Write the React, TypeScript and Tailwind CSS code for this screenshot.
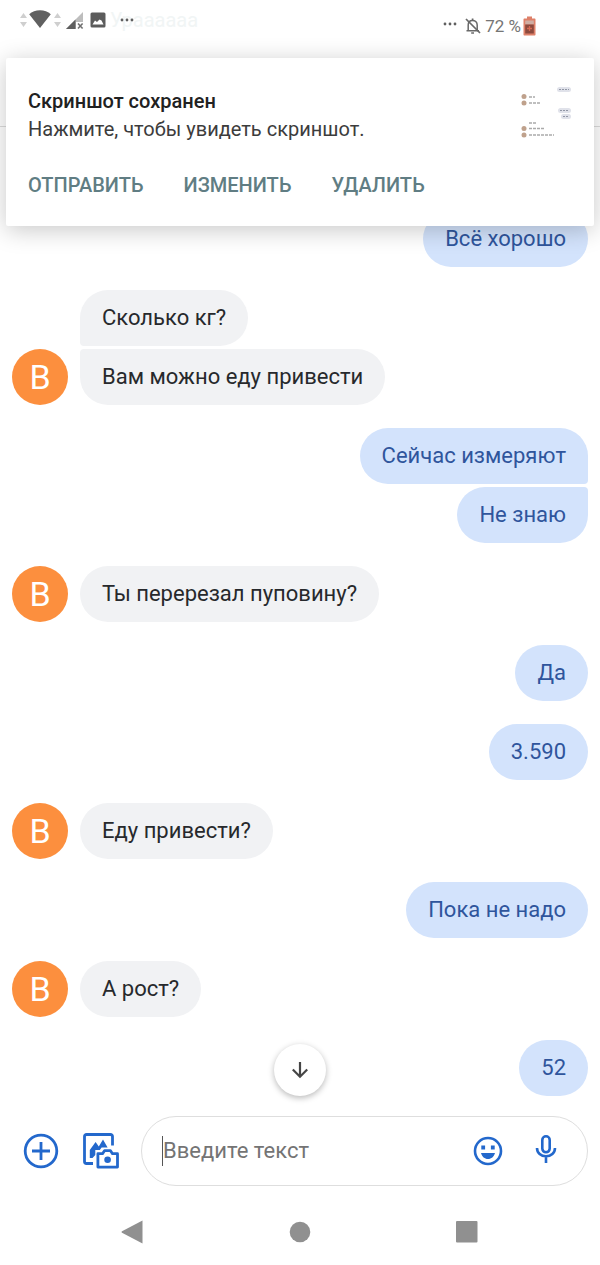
import type { ReactNode } from "react";

type Message = { text: string; corner?: string };
type Group = { from: "them" | "me"; messages: Message[] };

const groups: Group[] = [
  { from: "me", messages: [{ text: "Всё хорошо" }] },
  {
    from: "them",
    messages: [
      { text: "Сколько кг?", corner: "rounded-bl-sm" },
      { text: "Вам можно еду привести", corner: "rounded-tl-sm" },
    ],
  },
  {
    from: "me",
    messages: [
      { text: "Сейчас измеряют", corner: "rounded-br-sm" },
      { text: "Не знаю", corner: "rounded-tr-sm" },
    ],
  },
  { from: "them", messages: [{ text: "Ты перерезал пуповину?" }] },
  { from: "me", messages: [{ text: "Да" }] },
  { from: "me", messages: [{ text: "3.590" }] },
  { from: "them", messages: [{ text: "Еду привести?" }] },
  { from: "me", messages: [{ text: "Пока не надо" }] },
  { from: "them", messages: [{ text: "А рост?" }] },
  { from: "me", messages: [{ text: "52" }] },
];

function Dots() {
  return (
    <svg width="14" height="4" viewBox="0 0 14 4" fill="#5f5f5f">
      <circle cx="2" cy="2" r="1.4" />
      <circle cx="7" cy="2" r="1.4" />
      <circle cx="12" cy="2" r="1.4" />
    </svg>
  );
}

function DataArrows() {
  return (
    <svg width="7" height="14" viewBox="0 0 7 14" fill="#cfcfcf">
      <path d="M3.5 0L7 5H0zM3.5 14L0 9h7z" />
    </svg>
  );
}

function StatusBar() {
  return (
    <div className="flex h-10 items-center justify-between pl-5 pr-16">
      <div className="flex items-center">
        <DataArrows />
        <svg className="ml-px" width="24" height="20" viewBox="0 0 24 20" fill="#606060">
          <path d="M12 18L1.2 4.200C4 1.600 7.800 0.200 12 0.200s8 1.400 10.800 4z" />
        </svg>
        <span className="ml-0.5">
          <DataArrows />
        </span>
        <svg className="ml-1" width="19" height="19" viewBox="0 0 19 19">
          <path d="M18 1v10h-7v7H1z" fill="#bdbdbd" />
          <path d="M10.500 8.500V18H1z" fill="#5f5f5f" />
          <path d="M13 12.500l4.600 5M17.600 12.500l-4.600 5" stroke="#707070" strokeWidth="1.600" />
        </svg>
        <svg className="ml-1.5" width="16" height="16" viewBox="0 0 16 16">
          <rect x="0.500" y="0.500" width="15" height="15" rx="1.500" fill="#5c5c5c" />
          <path d="M2.500 12.500l2.500-4 2 1.500 2.500-2.500 2 1 2 4z" fill="#fff" />
        </svg>
        <span className="ml-3.5">
          <Dots />
        </span>
      </div>
      <div className="flex items-center pt-3">
        <span className="pb-1">
          <Dots />
        </span>
        <svg className="ml-2" width="16" height="18" viewBox="0 0 16 18" fill="none" stroke="#696969" strokeWidth="1.500">
          <path d="M3.200 13.500V8c0-2.800 1.800-4.600 4.300-4.600S12.200 5.200 12.200 8v5.500M1.500 13.700h12.500" />
          <path d="M7.600 3.400V1.500M6.200 16h2.800M1 2l14 14" strokeWidth="1.700" />
        </svg>
        <span className="ml-1 text-[17px] leading-5 text-[#757575]">72 %</span>
        <svg className="ml-0.5" width="13" height="20" viewBox="0 0 13 20">
          <path d="M4 0.500h5v2h2.500c.6 0 1 .4 1 1V18.500c0 .6-.4 1-1 1h-10c-.6 0-1-.4-1-1v-15c0-.6.4-1 1-1H4z" fill="#de8069" />
          <rect x="2.200" y="4.500" width="8.600" height="4" fill="#cfaea4" />
          <rect x="2.200" y="8.500" width="8.600" height="9" fill="#8c4a3e" />
          <path d="M6.500 10v5M4 12.500h5" stroke="#d66b54" strokeWidth="1.300" />
        </svg>
      </div>
    </div>
  );
}

function Thumbnail() {
  return (
    <svg width="52" height="52" viewBox="0 3 52 52" aria-hidden="true">
      <g fill="#e0e2ea">
        <rect x="37" y="4" width="14" height="5" rx="2.500" />
        <rect x="38" y="25" width="13" height="5" rx="2.500" />
        <rect x="41" y="31" width="10" height="5" rx="2.500" />
      </g>
      <g stroke="#9297a6" strokeWidth="1.200" strokeDasharray="2 1">
        <path d="M39 6.500h10M40 27.500h9M43 33.500h6" />
      </g>
      <g stroke="#aaa" strokeWidth="1.500" strokeDasharray="3 1">
        <path d="M9 14h6M9 20h11M9 40h8M9 45.500h15M9 52h25" />
      </g>
      <g fill="#bfa18c">
        <circle cx="4" cy="13.500" r="2.500" />
        <circle cx="4" cy="20" r="2.500" />
        <circle cx="4" cy="45.500" r="2.500" />
        <circle cx="4" cy="52" r="2.500" />
      </g>
    </svg>
  );
}

function Notification() {
  return (
    <section className="absolute inset-x-1.5 top-[58px] z-10 rounded-xs bg-white px-[22px] pb-[27px] pt-7 shadow-[0_4px_24px_rgba(0,0,0,0.22)]">
      <div className="flex items-start justify-between">
        <div className="pt-px text-[20px] leading-7 text-[#3c3c3c]">
          <h2 className="font-medium text-[#212121]">Скриншот сохранен</h2>
          <p>Нажмите, чтобы увидеть скриншот.</p>
        </div>
        <Thumbnail />
      </div>
      <div className="mt-7 flex gap-10 text-[20px] font-medium leading-7 text-[#607d83]">
        <button>ОТПРАВИТЬ</button>
        <button>ИЗМЕНИТЬ</button>
        <button>УДАЛИТЬ</button>
      </div>
    </section>
  );
}

function MessageGroup({ group }: { group: Group }) {
  const mine = group.from === "me";
  return (
    <div className={mine ? "flex justify-end" : "flex items-end gap-3"}>
      {!mine && (
        <div className="flex size-14 shrink-0 items-center justify-center rounded-full bg-[#fc8f3e] text-[34px] text-white">
          В
        </div>
      )}
      <div className={mine ? "flex flex-col items-end gap-[3px]" : "flex flex-col items-start gap-[3px]"}>
        {group.messages.map((m) => (
          <p
            key={m.text}
            className={`rounded-[28px] px-[22px] py-3 text-[22px] leading-8 ${
              mine ? "bg-[#d3e3fc] text-[#2f559c]" : "bg-[#f1f2f4] text-[#27292c]"
            } ${m.corner ?? ""}`}
          >
            {m.text}
          </p>
        ))}
      </div>
    </div>
  );
}

function IconButton({ label, children }: { label: string; children: ReactNode }) {
  return (
    <button aria-label={label} className="flex shrink-0 items-center justify-center">
      {children}
    </button>
  );
}

function Composer() {
  return (
    <form className="flex items-center pl-[23px] pr-3 pt-5" onSubmit={(e) => e.preventDefault()}>
      <IconButton label="Добавить">
        <svg width="36" height="36" viewBox="0 0 36 36" fill="none" stroke="#2368cc" strokeWidth="2.800">
          <circle cx="18" cy="18" r="15.800" />
          <path d="M18 9v18M9 18h18" />
        </svg>
      </IconButton>
      <div className="ml-6 flex">
        <IconButton label="Галерея и камера">
          <svg width="36" height="36" viewBox="0 0 36 36" fill="none" stroke="#2368cc" strokeWidth="2.800">
            <path d="M29.500 12.500V3.500a2 2 0 0 0-2-2H3.500a2 2 0 0 0-2 2v25a2 2 0 0 0 2 2h6.500" />
            <path d="M6.800 25V17l5.800-8 3.200 4.500L20 6.500l4.600 8h-6l-1.800 2.500h-4.500v5L9.500 25z" fill="#2368cc" stroke="none" />
            <path d="M14.900 20.700h4.600l2-3h6l2 3h5v13.400H14.900z" strokeLinejoin="round" />
            <circle cx="24.600" cy="26.800" r="3.300" fill="#2368cc" stroke="none" />
          </svg>
        </IconButton>
      </div>
      <div className="ml-[22px] flex h-[70px] min-w-0 flex-1 items-center rounded-full border border-[#dedede] bg-white pl-5 pr-[30px]">
        <span className="h-[30px] w-px shrink-0 bg-[#555]" />
        <input
          type="text"
          aria-label="Введите текст"
          placeholder="Введите текст"
          className="min-w-0 flex-1 bg-transparent text-[22px] leading-8 outline-none placeholder:text-[#747474]"
        />
        <IconButton label="Эмодзи">
          <svg width="30" height="30" viewBox="0 0 30 30">
            <circle cx="15" cy="15" r="13" fill="none" stroke="#2368cc" strokeWidth="2.600" />
            <path d="M8.300 9.500h3.800v4H8.300zM17.900 9.500h3.800v4h-3.800zM8 17h14c-1 3.800-3.700 6-7 6s-6-2.200-7-6z" fill="#2368cc" />
          </svg>
        </IconButton>
        <div className="ml-8 mb-1 flex">
          <IconButton label="Голосовой ввод">
            <svg width="22" height="30" viewBox="0 0 22 30" fill="none" stroke="#2368cc" strokeWidth="2.600">
              <rect x="7.300" y="2.300" width="7.400" height="16" rx="3.700" />
              <path d="M2 14c0 5 4 8.300 9 8.300s9-3.300 9-8.300M11 22.300V29" />
            </svg>
          </IconButton>
        </div>
      </div>
    </form>
  );
}

function NavBar() {
  return (
    <nav className="mt-7 grid grid-cols-3 px-[50px] pb-3">
      <IconButton label="Назад">
        <svg width="24" height="36" viewBox="0 0 24 36" fill="#909090">
          <path d="M21.500 6.500v23L1 18.800c-.6-.4-.6-1.200 0-1.600z" />
        </svg>
      </IconButton>
      <IconButton label="Домой">
        <svg width="24" height="36" viewBox="0 0 24 36" fill="#909090">
          <circle cx="12" cy="18" r="10.300" />
        </svg>
      </IconButton>
      <IconButton label="Недавние">
        <svg width="24" height="36" viewBox="0 0 24 36" fill="#909090">
          <rect x="1" y="7" width="21.500" height="21.500" rx="1" />
        </svg>
      </IconButton>
    </nav>
  );
}

export default function App() {
  return (
    <div className="relative min-h-screen overflow-hidden bg-white font-[Roboto,'Noto_Sans',sans-serif]">
      {/* Chat toolbar, mostly hidden under the notification */}
      <header className="absolute inset-x-0 top-0 h-[127px] border-b border-[#dcdcdc] pl-[110px] pt-2 text-[20px] leading-6 text-[#f1f5f5]">
        Ураааааа
      </header>

      <Notification />

      <div className="relative z-20">
        <StatusBar />
      </div>

      <main className="relative flex flex-col gap-[23px] px-3 pt-[171px]">
        {groups.map((g, i) => (
          <MessageGroup key={i} group={g} />
        ))}
        <button
          aria-label="Прокрутить вниз"
          className="absolute bottom-0 left-1/2 flex size-[52px] -translate-x-1/2 items-center justify-center rounded-full bg-white shadow-[0_2px_6px_rgba(0,0,0,0.28)]"
        >
          <svg width="18" height="18" viewBox="0 0 18 18" fill="none" stroke="#454545" strokeWidth="2.200">
            <path d="M9 1v14.500M1.800 8.500L9 15.700l7.200-7.200" />
          </svg>
        </button>
      </main>

      <Composer />
      <NavBar />
    </div>
  );
}
